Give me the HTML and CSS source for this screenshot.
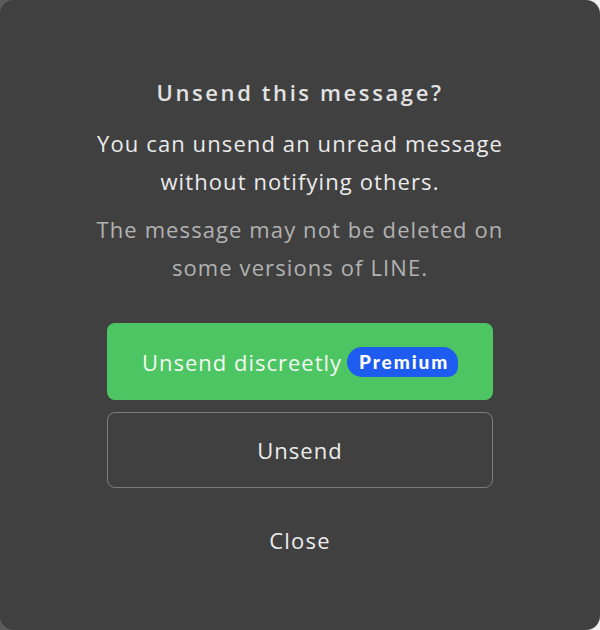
FILE: index.html
```html
<!DOCTYPE html>
<html lang="en">
<head>
<meta charset="utf-8">
<title>Unsend this message?</title>
<link rel="stylesheet" href="styles.css">
</head>
<body>
<div class="dialog" role="dialog" aria-labelledby="dlg-title">
  <h1 class="title" id="dlg-title">Unsend this message?</h1>
  <p class="desc">You can unsend an unread message<br>without notifying others.</p>
  <p class="note">The message may not be deleted on<br>some versions of LINE.</p>
  <div class="actions">
    <button class="btn btn-primary" type="button">Unsend discreetly <span class="badge">Premium</span></button>
    <button class="btn btn-outline" type="button">Unsend</button>
  </div>
  <button class="btn-link" type="button">Close</button>
</div>
</body>
</html>
```

FILE: styles.css
```css
html, body {
  margin: 0;
  padding: 0;
}
body {
  width: 600px;
  height: 630px;
  background: linear-gradient(90deg, #5c5c5c 0%, #8a8a8a 60%, #f0f0f0 100%);
  font-family: "Open Sans", "Noto Sans", "DejaVu Sans", sans-serif;
  overflow: hidden;
}
.dialog {
  box-sizing: border-box;
  width: 600px;
  height: 630px;
  border-radius: 14px;
  background: #404040;
  padding: 74px 40px 0;
  display: flex;
  flex-direction: column;
  align-items: center;
  text-align: center;
  white-space: nowrap;
}
.title {
  margin: 0;
  font-size: 22px;
  font-weight: 600;
  line-height: 36px;
  letter-spacing: 2.6px;
  color: #e2e2e2;
}
.desc {
  margin: 14px 0 0;
  font-size: 22px;
  line-height: 38px;
  letter-spacing: 1.1px;
  color: #ebebeb;
}
.note {
  margin: 10px 0 0;
  font-size: 22px;
  line-height: 38px;
  letter-spacing: 1.1px;
  color: #b2b2b2;
}
.actions {
  margin-top: 37px;
  width: 386px;
  display: flex;
  flex-direction: column;
  gap: 12px;
}
.btn {
  box-sizing: border-box;
  width: 100%;
  border-radius: 8px;
  font-family: inherit;
  font-size: 22px;
  letter-spacing: 1px;
  display: flex;
  align-items: center;
  justify-content: center;
  gap: 5px;
  cursor: pointer;
}
.btn-primary {
  height: 77px;
  border: none;
  background: #4cc562;
  color: #f4fbf2;
}
.btn-outline {
  height: 76px;
  border: 1.5px solid #7c7c7c;
  background: transparent;
  color: #ececec;
}
.badge {
  display: inline-flex;
  align-items: center;
  height: 30px;
  padding: 0 9px 0 12px;
  border-radius: 15px 15px 10px 15px;
  background: #1e5cf0;
  color: #ffffff;
  font-family: "Lato", "Noto Sans", sans-serif;
  font-weight: 900;
  font-size: 19px;
  letter-spacing: 1.9px;
}
.btn-link {
  margin-top: 33px;
  border: none;
  background: none;
  padding: 0;
  font-family: inherit;
  font-size: 22px;
  letter-spacing: 1.2px;
  line-height: 38px;
  color: #ececec;
  cursor: pointer;
}
```
